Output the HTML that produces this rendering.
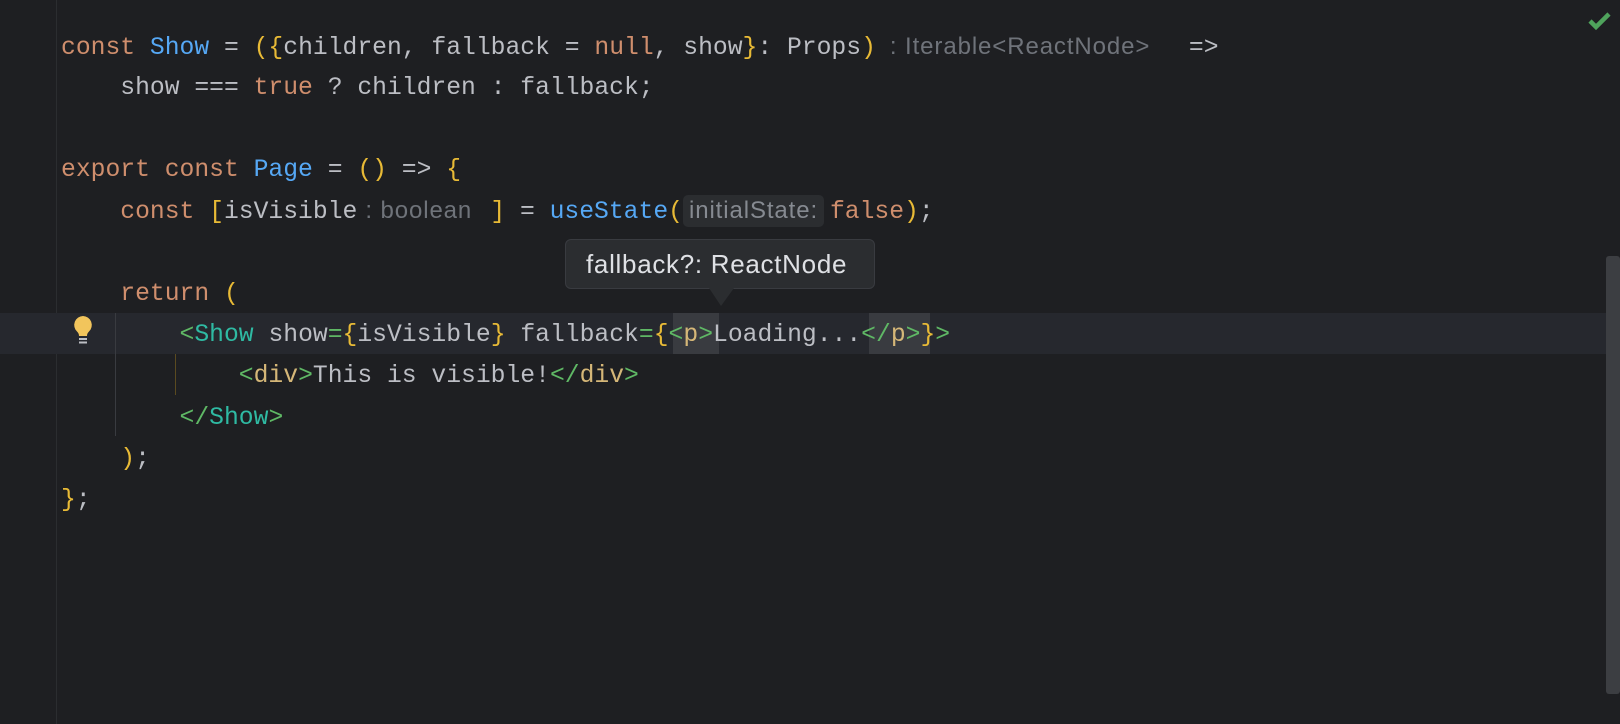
<!DOCTYPE html>
<html><head><meta charset="utf-8"><style>
html,body{margin:0;padding:0;background:#1e1f22;width:1620px;height:724px;overflow:hidden;position:relative}
.l{position:absolute;left:61px;height:41px;line-height:41px;font-family:"Liberation Mono",monospace;font-size:24.7px;color:#bcbec4;white-space:pre}
.k{color:#cf8e6d}.b{color:#56a8f5}.y{color:#e8ba36}.t{color:#2fbaa3}.g{color:#5fb865}.o{color:#d5b778}
.ih{display:inline-block;font-family:"Liberation Sans",sans-serif;font-size:24px;letter-spacing:0.9px;color:#6f737a;box-sizing:border-box;line-height:32px;vertical-align:middle;white-space:pre;overflow:hidden}
.ib{background:#2b2d30;border-radius:5px;height:32px;color:#868a91;padding-left:6px}
.hl{position:absolute;left:0;width:1606px;top:313px;height:41px;background:#26282e}
.pb{position:absolute;top:313px;height:41px;background:#393b40}
</style></head><body>
<div style="position:absolute;left:56px;top:0;width:1px;height:724px;background:#2b2d30"></div>
<div class="hl"></div>
<div class="pb" style="left:673px;width:46px"></div>
<div class="pb" style="left:869px;width:61px"></div>
<div style="position:absolute;left:115px;top:313px;width:1px;height:123px;background:#393b40"></div>
<div style="position:absolute;left:175px;top:354px;width:1px;height:41px;background:#5a4a20"></div>

<div class="l" style="top:28px"><span class="k">const </span><span class="b">Show</span> = <span class="y">({</span>children, fallback = <span class="k">null</span>, show<span class="y">}</span>: Props<span class="y">)</span><span class="ih" style="width:313px;padding-left:14px">: Iterable&lt;ReactNode&gt;</span>=&gt;</div>
<div class="l" style="top:68px">    show === <span class="k">true</span> ? children : fallback;</div>
<div class="l" style="top:150px"><span class="k">export const </span><span class="b">Page</span> = <span class="y">()</span> =&gt; <span class="y">{</span></div>
<div class="l" style="top:192px">    <span class="k">const </span><span class="y">[</span>isVisible<span class="ih" style="width:133px;padding-left:8px">: boolean</span><span class="y">]</span> = <span class="b">useState</span><span class="y">(</span><span class="ih ib" style="width:141px;margin-right:6px">initialState:</span><span class="k">false</span><span class="y">)</span>;</div>
<div class="l" style="top:274px">    <span class="k">return </span><span class="y">(</span></div>
<div class="l" style="top:315px">        <span class="g">&lt;</span><span class="t">Show</span> show<span class="g">=</span><span class="y">{</span>isVisible<span class="y">}</span> fallback<span class="g">=</span><span class="y">{</span><span class="g">&lt;</span><span class="o">p</span><span class="g">&gt;</span>Loading...<span class="g">&lt;/</span><span class="o">p</span><span class="g">&gt;</span><span class="y">}</span><span class="g">&gt;</span></div>
<div class="l" style="top:356px">            <span class="g">&lt;</span><span class="o">div</span><span class="g">&gt;</span>This is visible!<span class="g">&lt;/</span><span class="o">div</span><span class="g">&gt;</span></div>
<div class="l" style="top:398px">        <span class="g">&lt;/</span><span class="t">Show</span><span class="g">&gt;</span></div>
<div class="l" style="top:439px">    <span class="y">)</span>;</div>
<div class="l" style="top:480px"><span class="y">}</span>;</div>

<svg style="position:absolute;left:70px;top:314px" width="26" height="32" viewBox="0 0 26 32">
<path d="M13 2a9 9 0 0 0-6 15.5c1.3 1.3 2 2.5 2 4.5h8c0-2 .7-3.2 2-4.5A9 9 0 0 0 13 2z" fill="#f2c55c"/>
<rect x="9" y="24" width="8" height="2" fill="#bcbec4"/><rect x="9" y="27.5" width="8" height="2" fill="#bcbec4"/>
</svg>

<div style="position:absolute;left:565px;top:239px;width:310px;height:50px;background:#2b2d30;border:1px solid #393b40;border-radius:6px;box-sizing:border-box;font-family:'Liberation Sans',sans-serif;font-size:26px;letter-spacing:0.7px;color:#dfe1e5;line-height:48px;padding-left:20px;white-space:nowrap">fallback?: ReactNode</div>
<svg style="position:absolute;left:708px;top:288px" width="28" height="20"><path d="M1 0 L13 18 L26 0Z" fill="#2b2d30"/></svg>

<div style="position:absolute;left:1606px;top:256px;width:14px;height:438px;background:#3c3e42;border-radius:3px"></div>
<svg style="position:absolute;left:1588px;top:11px" width="24" height="20"><path d="M2 10 L8 16 L21 3" stroke="#4fa35c" stroke-width="4.5" fill="none"/></svg>
</body></html>
